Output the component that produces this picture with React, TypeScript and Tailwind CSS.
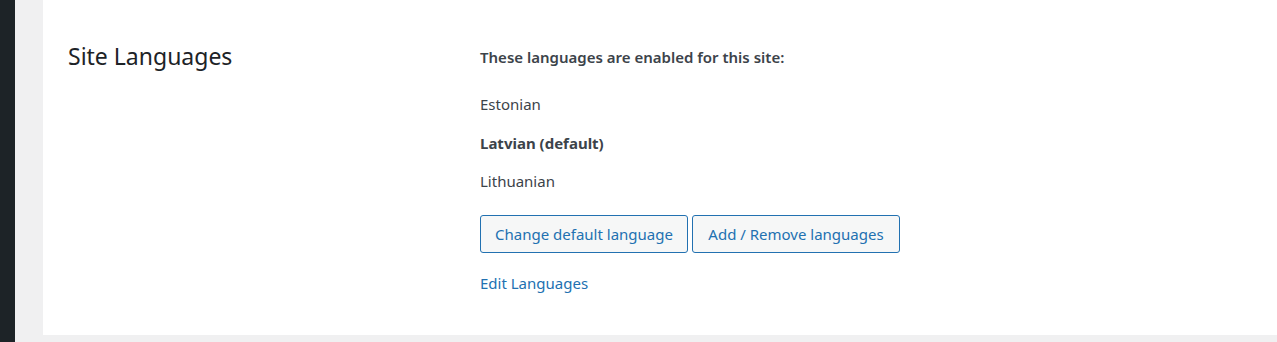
export default function App() {
  const languages = [
    { name: 'Estonian', isDefault: false },
    { name: 'Latvian (default)', isDefault: true },
    { name: 'Lithuanian', isDefault: false },
  ]

  return (
    <div className="flex h-[342px] w-[1277px] overflow-hidden bg-[#f0f0f1] font-['Noto_Sans',sans-serif] text-[#3c434a]">
      <div className="w-[15px] shrink-0 bg-[#1d2327]" />
      <div className="flex-1 pl-7">
        <div className="flex h-[335px] bg-white pl-[25px]">
          <div className="w-[412px] shrink-0 pt-[40px]">
            <h2 className="text-[23px] leading-[32px] text-[#1d2327]">Site Languages</h2>
          </div>
          <div className="pt-[46px] text-[15px]">
            <p className="font-semibold leading-[22px]">These languages are enabled for this site:</p>
            <ul className="mt-[25px] flex flex-col gap-[16.5px]">
              {languages.map((lang) => (
                <li key={lang.name} className={`leading-[22px] ${lang.isDefault ? 'font-bold' : ''}`}>
                  {lang.name}
                </li>
              ))}
            </ul>
            <div className="mt-[23px] flex gap-1">
              <button
                type="button"
                className="h-[38px] w-[208px] rounded-[3px] border border-[#2271b1] bg-[#f6f7f7] text-[15px] text-[#2271b1]"
              >
                Change default language
              </button>
              <button
                type="button"
                className="h-[38px] w-[208px] rounded-[3px] border border-[#2271b1] bg-[#f6f7f7] text-[15px] text-[#2271b1]"
              >
                Add / Remove languages
              </button>
            </div>
            <a href="#" className="mt-[19px] block leading-[22px] text-[#2271b1]">
              Edit Languages
            </a>
          </div>
        </div>
      </div>
    </div>
  )
}
